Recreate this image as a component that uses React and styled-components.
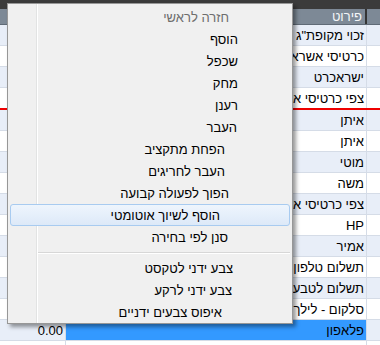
import React from "react";
import styled, { createGlobalStyle } from "styled-components";

const Global = createGlobalStyle`
  html, body { margin: 0; padding: 0; background: #ffffff; overflow: hidden; }
  #root { width: 380px; height: 345px; }
`;

const FONT = `"Liberation Sans", "DejaVu Sans", Arial, sans-serif`;

const Page = styled.div`
  position: relative;
  width: 380px;
  height: 345px;
  overflow: hidden;
  background: #ffffff;
  font-family: ${FONT};
  font-size: 13px;
  color: #000;
`;

const TopBar = styled.div`
  height: 9px;
  background: #3b3b3b;
`;

const COLS = "66px 301px 13px";

const HeaderRow = styled.div`
  display: grid;
  grid-template-columns: ${COLS};
  height: 15px;
  border-bottom: 1px solid #5f6a76;
  background: #7d8996;
`;

const HeaderCell = styled.div`
  display: flex;
  align-items: center;
  justify-content: flex-start;
  padding-right: 3px;
  color: #f4f6f8;
  direction: rtl;
  border-right: ${(p) => (p.$divider ? "2px solid #343434" : "none")};
`;

const Row = styled.div`
  display: grid;
  grid-template-columns: ${COLS};
  height: 20px;
  border-bottom: ${(p) => (p.$marker ? "2px solid #ee0000" : "1px solid #d5dce7")};
  background: ${(p) => (p.$odd ? "#e8eef8" : "#ffffff")};
`;

const Cell = styled.div`
  display: flex;
  align-items: center;
  justify-content: flex-start;
  padding-right: 2px;
  white-space: nowrap;
  overflow: hidden;
  direction: rtl;
  border-right: ${(p) => (p.$last ? "none" : "1px solid #d5dce7")};
  background: ${(p) => (p.$selected ? "#3399ff" : "transparent")};
`;

const Menu = styled.div`
  position: absolute;
  left: 7px;
  top: 3px;
  width: 286px;
  box-sizing: border-box;
  padding: 2px 2px 0 2px;
  border: 1px solid #979797;
  background: linear-gradient(
    to right,
    #f0f0f0 28px,
    #e2e3e3 28px,
    #e2e3e3 29px,
    #ffffff 29px,
    #ffffff 30px,
    #f0f0f0 30px
  );
  box-shadow: 3px 3px 4px rgba(0, 0, 0, 0.4);
  display: flex;
  flex-direction: column;
  font-family: ${FONT};
  font-size: 13px;
`;

const Item = styled.div`
  height: 22px;
  box-sizing: border-box;
  display: flex;
  align-items: center;
  justify-content: flex-start;
  padding-right: ${(p) => p.$pr}px;
  direction: rtl;
  white-space: nowrap;
  color: ${(p) => (p.$disabled ? "#6d6d6d" : "#000000")};
  border: 1px solid ${(p) => (p.$active ? "#a8cbf0" : "transparent")};
  border-radius: 3px;
  background: ${(p) =>
    p.$active ? "linear-gradient(to bottom, #eef5fd, #dde9f8)" : "transparent"};
`;

const Separator = styled.div`
  height: 9px;
  margin-left: 28px;
  display: flex;
  flex-direction: column;
  justify-content: center;
  &::before {
    content: "";
    display: block;
    height: 1px;
    background: #d7d7d7;
  }
  &::after {
    content: "";
    display: block;
    height: 1px;
    background: #ffffff;
  }
`;

const rows = [
  { text: 'זכוי מקופת"ג' },
  { text: "כרטיסי אשראי" },
  { text: "ישראכרט" },
  { text: "צפי כרטיסי אשראי", marker: true },
  { text: "איתן" },
  { text: "איתן" },
  { text: "מוטי" },
  { text: "משה" },
  { text: "צפי כרטיסי אשראי" },
  { text: "HP" },
  { text: "אמיר" },
  { text: "תשלום טלפון" },
  { text: "תשלום לטבע" },
  { text: "סלקום - לילך" },
  { text: "פלאפון", selected: true, amount: "0.00" },
  { text: "" },
];

const menuItems = [
  { text: "חזרה לראשי", pr: 60, disabled: true },
  { text: "הוסף", pr: 51 },
  { text: "שכפל", pr: 51 },
  { text: "מחק", pr: 51 },
  { text: "רענן", pr: 51 },
  { text: "העבר", pr: 52 },
  { text: "הפחת מתקציב", pr: 64 },
  { text: "העבר לחריגים", pr: 64 },
  { text: "הפוך לפעולה קבועה", pr: 60 },
  { text: "הוסף לשיוך אוטומטי", pr: 69, active: true },
  { text: "סנן לפי בחירה", pr: 61 },
  { sep: true },
  { text: "צבע ידני לטקסט", pr: 56 },
  { text: "צבע ידני לרקע", pr: 57 },
  { text: "איפוס צבעים ידניים", pr: 67 },
];

export default function App() {
  return (
    <Page>
      <Global />
      <TopBar />
      <HeaderRow>
        <HeaderCell />
        <HeaderCell $divider>פירוט</HeaderCell>
        <HeaderCell />
      </HeaderRow>
      {rows.map((r, i) => (
        <Row key={i} $odd={i % 2 === 0} $marker={r.marker}>
          <Cell>{r.amount || ""}</Cell>
          <Cell $selected={r.selected}>{r.text}</Cell>
          <Cell $last />
        </Row>
      ))}
      <Menu>
        {menuItems.map((m, i) =>
          m.sep ? (
            <Separator key={i} />
          ) : (
            <Item key={i} $pr={m.pr} $disabled={m.disabled} $active={m.active}>
              {m.text}
            </Item>
          )
        )}
      </Menu>
    </Page>
  );
}
